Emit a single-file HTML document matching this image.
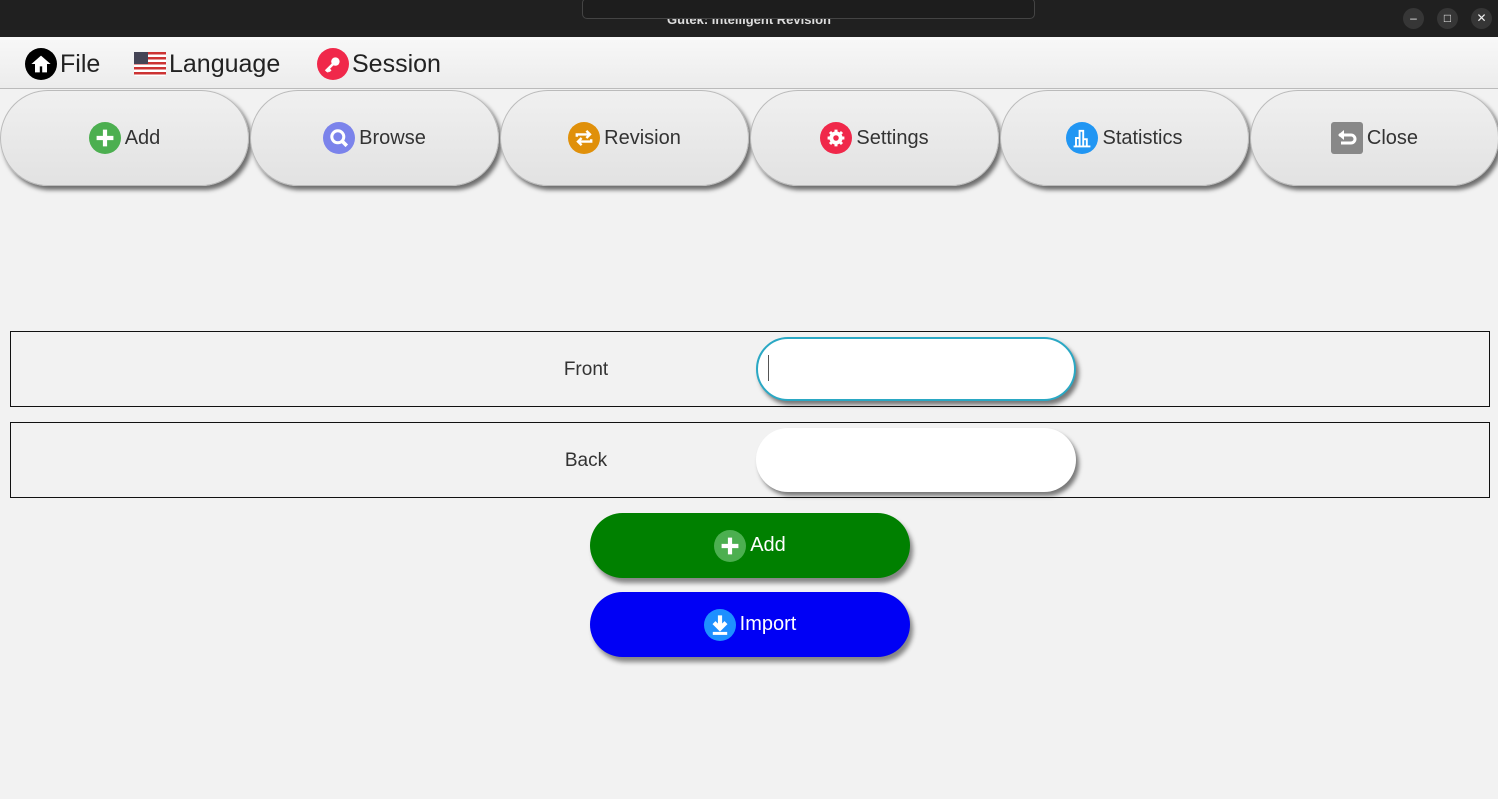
<!DOCTYPE html>
<html><head><meta charset="utf-8"><style>
*{box-sizing:border-box;margin:0;padding:0}
body{width:1498px;height:799px;background:#f2f2f2;font-family:"Liberation Sans","DejaVu Sans",sans-serif;position:relative;overflow:hidden;color:#333}
.tb{position:absolute;left:0;top:0;width:1498px;height:37px;background:#202020}
.title{position:absolute;left:0;width:1498px;top:12px;text-align:center;color:#ddd;font-weight:bold;font-size:13px}
.tip{position:absolute;left:582px;top:-2px;width:453px;height:21px;background:#1d1d1d;border:1px solid #444;border-radius:5px}
.wb{position:absolute;top:8px;width:21px;height:21px;border-radius:50%;background:#363636;color:#eee;font-size:12px;text-align:center;line-height:21px}
.menu{position:absolute;left:0;top:37px;width:1498px;height:52px;background:linear-gradient(#f8f8f8,#ececec);border-bottom:1px solid #bbb}
.mi{position:absolute;top:11px;height:32px;font-size:25px;color:#222;display:flex;align-items:center;gap:3px}
.btn{position:absolute;top:90px;height:96px;width:249px;border-radius:48px;background:linear-gradient(#f0f0f0,#e2e2e2);box-shadow:3px 4px 4px rgba(0,0,0,.55);border:1px solid #bbb;display:flex;align-items:center;justify-content:center;gap:4px;font-size:20px;color:#333}
.ic{width:32px;height:32px;border-radius:50%;display:flex;align-items:center;justify-content:center;flex:none}
.ic svg{width:24px;height:24px}
.row{position:absolute;left:10px;width:1480px;height:76px;border:1px solid #111}
.lab{position:absolute;left:0;width:1150px;text-align:center;font-size:19px;top:27px;color:#333}
.inp{position:absolute;left:745px;top:5px;width:320px;height:64px;border-radius:32px;background:#fff;box-shadow:3px 4px 4px rgba(0,0,0,.5)}
.big{position:absolute;left:590px;width:320px;height:65px;border-radius:33px;box-shadow:3px 5px 5px rgba(0,0,0,.45);display:flex;align-items:center;justify-content:center;gap:4px;color:#fff;font-size:20px}
</style></head><body>
<div class="tb"><div class="title">Gutek: Intelligent Revision</div><div class="tip"></div>
<div class="wb" style="left:1403px">–</div><div class="wb" style="left:1437px">□</div><div class="wb" style="left:1471px">✕</div></div>
<div class="menu">
<div class="mi" style="left:25px"><div class="ic" style="background:#000"><svg viewBox="0 0 20 20"><path d="M10 3L2 10h3v7h4v-5h2v5h4v-7h3z" fill="#fff"/></svg></div>File</div>
<div class="mi" style="left:134px"><svg width="32" height="24" viewBox="0 0 32 24"><rect width="32" height="24" rx="2" fill="#fff"/><g fill="#c33"><rect y="0" width="32" height="2.5"/><rect y="5" width="32" height="2.5"/><rect y="10" width="32" height="2.5"/><rect y="15" width="32" height="2.5"/><rect y="20" width="32" height="2.5"/></g><rect width="14" height="12" fill="#445"/></svg>Language</div>
<div class="mi" style="left:317px"><div class="ic" style="background:#f0284a"><svg viewBox="0 0 20 20"><circle cx="12" cy="8" r="3.5" fill="#fff"/><path d="M10 10L4 16M6 14l2 2M5 15l1.5 1.5" stroke="#fff" stroke-width="2.2"/></svg></div>Session</div>
</div>
<div class="btn" style="left:0"><div class="ic" style="background:#4caf50"><svg viewBox="0 0 20 20"><path d="M10 3v14M3 10h14" stroke="#fff" stroke-width="3.5"/></svg></div>Add</div>
<div class="btn" style="left:250px"><div class="ic" style="background:#7b83eb"><svg viewBox="0 0 20 20"><circle cx="9" cy="9" r="5" stroke="#fff" stroke-width="2.5" fill="none"/><path d="M12.5 12.5l4 4" stroke="#fff" stroke-width="3"/></svg></div>Browse</div>
<div class="btn" style="left:500px"><div class="ic" style="background:#e0900a"><svg viewBox="0 0 20 20"><path d="M4 9V7h11M12 4l3 3-3 3M16 11v2H5M8 16l-3-3 3-3" stroke="#fff" stroke-width="2" fill="none"/></svg></div>Revision</div>
<div class="btn" style="left:750px"><div class="ic" style="background:#f0284a"><svg viewBox="0 0 20 20"><circle cx="10" cy="10" r="5.5" fill="#fff"/><path d="M10 3v14M3 10h14M5 5l10 10M15 5L5 15" stroke="#fff" stroke-width="2.5"/><circle cx="10" cy="10" r="2.3" fill="#f0284a"/></svg></div>Settings</div>
<div class="btn" style="left:1000px"><div class="ic" style="background:#2196f3"><svg viewBox="0 0 20 20"><path d="M3 17h14M5 17v-7h3v7M8 17V4h3v13M11 17v-6h3v6" stroke="#fff" stroke-width="1.6" fill="none"/></svg></div>Statistics</div>
<div class="btn" style="left:1250px"><div class="ic" style="background:#888;border-radius:3px"><svg viewBox="0 0 24 24"><path d="M4 9h12a4 4 0 010 8H6" stroke="#fff" stroke-width="3" fill="none"/><path d="M9 4L3 9l6 5z" fill="#fff"/></svg></div>Close</div>

<div class="row" style="top:331px"><div class="lab">Front</div><div class="inp" style="border:2px solid #2aa8c4"><div style="position:absolute;left:10px;top:16px;width:1px;height:26px;background:#555"></div></div></div>
<div class="row" style="top:422px"><div class="lab">Back</div><div class="inp"></div></div>

<div class="big" style="top:513px;background:#008000"><div class="ic" style="background:#4caf50"><svg viewBox="0 0 20 20"><path d="M10 3v14M3 10h14" stroke="#fff" stroke-width="3.5"/></svg></div>Add</div>
<div class="big" style="top:592px;background:#0000f5"><div class="ic" style="background:#1e90ff"><svg viewBox="0 0 20 20"><path d="M10 2v9M5 8l5 5 5-5" stroke="#fff" stroke-width="3.5" fill="none"/><path d="M4 17h12" stroke="#fff" stroke-width="2.5"/></svg></div>Import</div>
</body></html>
